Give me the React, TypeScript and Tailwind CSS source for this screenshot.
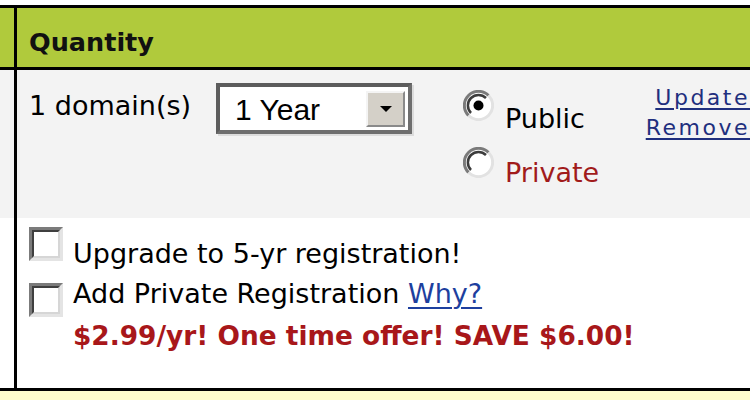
import React from 'react'

const sans = { fontFamily: '"DejaVu Sans", Verdana, sans-serif' }

function Radio({ checked }: { checked?: boolean }) {
  return (
    <svg width="31" height="31" viewBox="0 0 31 31" className="shrink-0">
      <circle cx="15.5" cy="15.5" r="13" fill="#ffffff" />
      <path d="M5.5 25.5 A14 14 0 0 1 25.5 5.5" fill="none" stroke="#7a7a7a" strokeWidth="3" />
      <path d="M8 23 A10.5 10.5 0 0 1 23 8" fill="none" stroke="#3c3c3c" strokeWidth="2.5" />
      <path d="M25.5 5.5 A14 14 0 0 1 5.5 25.5" fill="none" stroke="#e2e2e2" strokeWidth="3" />
      {checked && <circle cx="15.5" cy="15.5" r="5" fill="#000000" />}
    </svg>
  )
}

function Checkbox() {
  return (
    <div className="w-[34px] h-[34px] shrink-0 border-[3px] border-t-[#7b7b7b] border-l-[#7b7b7b] border-r-[#e4e4e4] border-b-[#e4e4e4] bg-white">
      <div className="w-full h-full border-[2px] border-t-[#3f3f3f] border-l-[#3f3f3f] border-r-[#d6d6d6] border-b-[#d6d6d6]" />
    </div>
  )
}

function YearSelect() {
  return (
    <div className="w-[196px] h-[51px] mt-[13px] border-[4px] border-t-[#5c5c5c] border-l-[#5c5c5c] border-r-[#6e6e6e] border-b-[#6e6e6e] shadow-[2px_2px_0_#dcdcdc] bg-white flex items-center pr-[3px]">
      <span className="flex-1 pl-[15px] text-[30px] leading-none text-black pt-[2px]" style={{ fontFamily: '"Liberation Sans", Arial, sans-serif' }}>
        1 Year
      </span>
      <div className="w-[39px] h-[36px] bg-[#d4d0c8] border-[2px] border-t-[#f4f4f4] border-l-[#f4f4f4] border-r-[#8a8a8a] border-b-[#8a8a8a] grid place-items-center">
        <div className="w-0 h-0 border-l-[6px] border-r-[6px] border-t-[6px] border-l-transparent border-r-transparent border-t-black" />
      </div>
    </div>
  )
}

export default function App() {
  return (
    <div className="w-[750px] h-[400px] overflow-hidden bg-white text-black" style={sans}>
      <div className="h-[5px] bg-white" />
      <div className="border-t-[3px] border-b-[3px] border-black flex flex-col">
        {/* header */}
        <div className="flex h-[59px] bg-[#b0ca3c] border-b-[3px] border-black box-content">
          <div className="w-[14px] shrink-0" />
          <div className="flex-1 border-l-[3px] border-black pl-[12px] pt-[20px]">
            <span className="text-[25.5px] font-bold leading-[29px] text-[#111]">Quantity</span>
          </div>
        </div>

        {/* quantity row */}
        <div className="flex h-[148px] bg-[#f3f3f3]">
          <div className="w-[14px] shrink-0" />
          <div className="flex-1 border-l-[3px] border-black pl-[12px] flex items-start">
            <div className="w-[187px] shrink-0 pt-[20px] text-[27px] leading-[31px]">1 domain(s)</div>
            <YearSelect />
            <div className="ml-[51px] flex flex-col pt-[20px]">
              <div className="flex items-start gap-[11px]">
                <Radio checked />
                <span className="text-[27px] leading-[31px] mt-[13px]">Public</span>
              </div>
              <div className="flex items-start gap-[11px] mt-[13px]">
                <Radio />
                <span className="text-[27px] leading-[31px] mt-[10px] text-[#a11b1b]">Private</span>
              </div>
            </div>
            <div className="flex-1 flex flex-col items-end pt-[13px] text-[22px] leading-[30px] tracking-[2.5px] text-[#1f2f7e]">
              <a className="underline underline-offset-[3px] decoration-[2px]">Update</a>
              <a className="underline underline-offset-[3px] decoration-[2px]">Remove</a>
            </div>
          </div>
        </div>

        {/* options row */}
        <div className="flex h-[170px] bg-white">
          <div className="w-[14px] shrink-0" />
          <div className="flex-1 border-l-[3px] border-black pl-[12px] pt-[9px] flex flex-col">
            <div className="flex items-start gap-[10px]">
              <Checkbox />
              <span className="text-[27px] leading-[31px] mt-[11px]">Upgrade to 5-yr registration!</span>
            </div>
            <div className="flex items-start gap-[10px] mt-[9px]">
              <div className="mt-[5px]"><Checkbox /></div>
              <span className="text-[27px] leading-[31px]">
                Add Private Registration{' '}
                <a className="text-[#1d3f9e] underline underline-offset-[4px] decoration-[2px]">Why?</a>
              </span>
            </div>
            <div className="pl-[44px] mt-[4px] text-[26.4px] leading-[30px] font-bold text-[#a8171a]">
              $2.99/yr! One time offer! SAVE $6.00!
            </div>
          </div>
        </div>
      </div>
      <div className="h-[20px] bg-[#fefdcb]" />
    </div>
  )
}
